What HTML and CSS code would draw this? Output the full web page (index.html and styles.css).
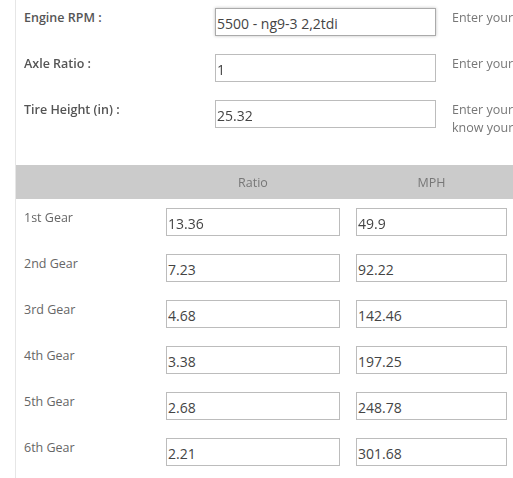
FILE: index.html
```html
<!DOCTYPE html>
<html>
<head>
<meta charset="utf-8">
<link rel="stylesheet" href="styles.css">
</head>
<body>
<div class="wrap">
  <div class="form">
    <div class="frow">
      <label class="flabel">Engine RPM :</label>
      <input class="field focus" type="text" value="5500 - ng9-3 2,2tdi" autofocus>
      <div class="help">Enter your engine RPM</div>
    </div>
    <div class="frow">
      <label class="flabel">Axle Ratio :</label>
      <input class="field" type="text" value="1">
      <div class="help">Enter your axle ratio</div>
    </div>
    <div class="frow">
      <label class="flabel">Tire Height (in) :</label>
      <input class="field" type="text" value="25.32">
      <div class="help">Enter your tire height if you don't<br>know your tire height</div>
    </div>
  </div>
  <div class="table">
    <div class="thead">
      <div></div>
      <div class="th">Ratio</div>
      <div class="th">MPH</div>
    </div>
    <div class="tbody">
      <div class="glabel">1st Gear</div><input class="cell" type="text" value="13.36"><input class="cell" type="text" value="49.9">
      <div class="glabel">2nd Gear</div><input class="cell" type="text" value="7.23"><input class="cell" type="text" value="92.22">
      <div class="glabel">3rd Gear</div><input class="cell" type="text" value="4.68"><input class="cell" type="text" value="142.46">
      <div class="glabel">4th Gear</div><input class="cell" type="text" value="3.38"><input class="cell" type="text" value="197.25">
      <div class="glabel">5th Gear</div><input class="cell" type="text" value="2.68"><input class="cell" type="text" value="248.78">
      <div class="glabel">6th Gear</div><input class="cell" type="text" value="2.21"><input class="cell" type="text" value="301.68">
    </div>
  </div>
</div>
</body>
</html>
```
FILE: styles.css
```css
html, body {
  margin: 0;
  padding: 0;
  background: #fff;
  overflow: hidden;
}
body {
  font-family: "Open Sans", "Liberation Sans", sans-serif;
  color: #555;
  height: 478px;
}
.wrap {
  margin-left: 15px;
  border-left: 1px solid #e6e6e6;
  height: 478px;
  width: 620px;
}
.form {
  padding: 8px 0 0 8px;
  display: flex;
  flex-direction: column;
  gap: 18px;
}
.frow {
  display: grid;
  grid-template-columns: 175px 221px 240px;
  column-gap: 16px;
  align-items: start;
}
.flabel {
  font-size: 12.5px;
  font-weight: 600;
  line-height: 18px;
  color: #555;
  padding-top: 1px;
}
.field, .cell {
  box-sizing: border-box;
  height: 28px;
  margin: 0;
  padding: 2px 1px 0;
  border: 1px solid #bcbcbc;
  background: #fff;
  font-family: "Open Sans", "Liberation Sans", sans-serif;
  font-size: 14px;
  color: #444;
  outline: none;
  border-radius: 0;
}
.field { width: 221px; }
.field.focus {
  border-color: #aaa;
  box-shadow: 0 0 3px rgba(0,0,0,0.25);
  caret-color: #222;
}
.help {
  font-size: 12.5px;
  line-height: 18px;
  color: #777;
  white-space: nowrap;
  padding-top: 1px;
}
.table {
  margin-top: 28px;
}
.thead {
  display: grid;
  grid-template-columns: 134px 174px 151px;
  column-gap: 16px;
  height: 34px;
  align-items: center;
  background: #cbcbcb;
}
.th {
  text-align: center;
  font-size: 12.5px;
  color: #777;
}
.tbody {
  display: grid;
  grid-template-columns: 134px 174px 151px;
  column-gap: 16px;
  row-gap: 18px;
  padding-top: 9px;
}
.glabel {
  padding: 1px 0 0 8px;
  font-size: 12.5px;
  line-height: 18px;
  color: #666;
}
.cell { width: 100%; }
```
